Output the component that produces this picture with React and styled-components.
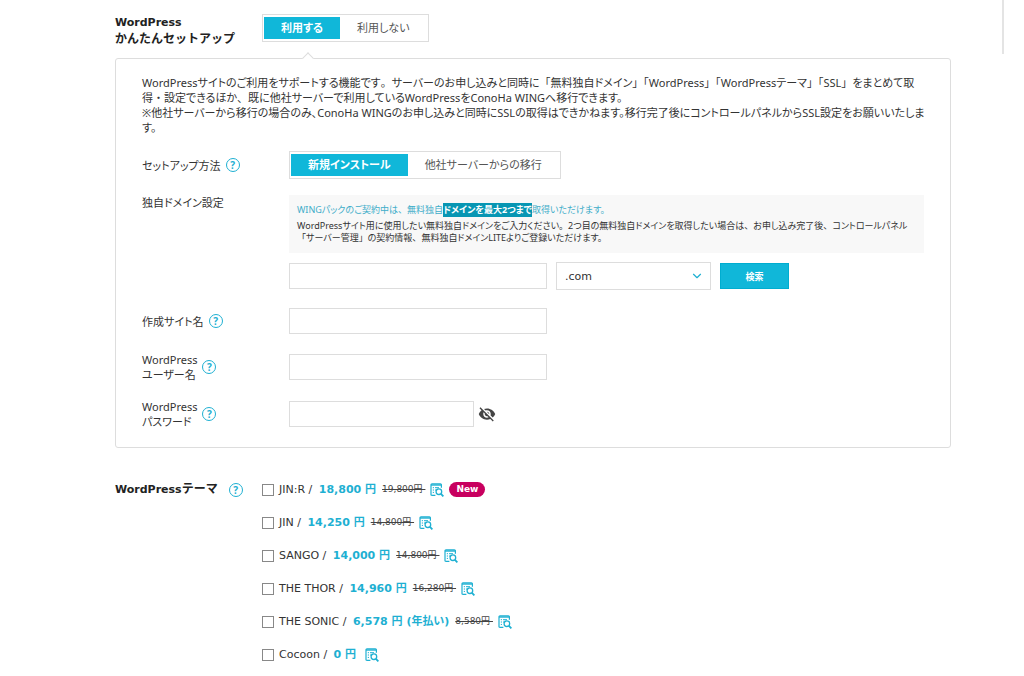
import React, { useState } from 'react'
import styled, { createGlobalStyle } from 'styled-components'
import { MdVisibilityOff } from 'react-icons/md'
import { FiChevronDown } from 'react-icons/fi'

const GlobalStyle = createGlobalStyle`
  * {
    box-sizing: border-box;
  }
  body {
    margin: 0;
    background: #fff;
    color: #333;
    font-family: "Noto Sans", "Noto Sans CJK JP", sans-serif;
    font-size: 11px;
    line-height: 15px;
    font-feature-settings: "palt";
  }
  button, input, select {
    font: inherit;
    color: inherit;
    margin: 0;
  }
`
const Page = styled.div`
  display: grid;
  grid-template-columns: minmax(0, 1fr) 73px;
`
const Main = styled.main`
  padding: 14px 0 12px 115px;
`
const Side = styled.div`
  width: 53px;
  height: 54px;
  border-right: 2px solid #e4e4e4;
`
const Section = styled.section`
  display: grid;
  grid-template-columns: 147px minmax(0, 1fr);
  align-items: start;
`
const Heading = styled.h2`
  display: flex;
  align-items: center;
  gap: 11px;
  margin: 0;
  font-family: "DejaVu Sans", "Noto Sans CJK JP", sans-serif;
  font-size: 12px;
  line-height: 17px;
  font-weight: bold;
  font-feature-settings: normal;
  color: #222;
`
const Latin = styled.span`
  font-size: 11px;
`
// punctuation at its full width
const Wide = styled.span`
  font-feature-settings: normal;
`
const Toggle = styled.div`
  display: inline-flex;
  padding: 2px 1px;
  border: 1px solid #ddd;
  background: #fff;
`
const ToggleButton = styled.button`
  height: 22px;
  padding: 0 17px;
  border: 0;
  background: ${props => (props.$active ? '#10b7d9' : '#fff')};
  color: ${props => (props.$active ? '#fff' : '#555')};
  font-weight: ${props => (props.$active ? 'bold' : 'normal')};
  line-height: 20px;
  cursor: pointer;
`
const Panel = styled.div`
  position: relative;
  margin-top: 10px;
  padding: 16px 20px 18px 26px;
  border: 1px solid #ddd;
  border-radius: 3px;
  &::before {
    content: "";
    position: absolute;
    top: -5px;
    left: 188px;
    width: 7px;
    height: 7px;
    border: solid #ddd;
    border-width: 1px 0 0 1px;
    background: #fff;
    transform: rotate(45deg);
  }
`
const Lead = styled.p`
  margin: 0 0 16px;
`
const Field = styled.div`
  display: grid;
  grid-template-columns: 147px minmax(0, 1fr);
  align-items: ${props => props.$align || 'center'};
  margin-top: ${props => props.$top || 0}px;
`
const FieldName = styled.div`
  display: flex;
  align-items: center;
  gap: 5px;
`
const HelpButton = styled.button`
  flex: none;
  width: 14px;
  height: 14px;
  padding: 0;
  border: 1px solid #1eb0d2;
  border-radius: 50%;
  background: #fff;
  color: #1eb0d2;
  font-family: "Noto Sans", sans-serif;
  font-size: 10px;
  font-weight: bold;
  line-height: 12px;
  text-align: center;
  cursor: pointer;
`
const Notice = styled.div`
  margin-right: 6px;
  padding: 8px 8px 9px;
  background: #f8f8f8;
  font-size: 9px;
  line-height: 12px;
  p {
    margin: 0;
  }
`
const NoticeLead = styled.p`
  line-height: 14px;
  color: #3fadc9;
  && {
    margin-bottom: 3px;
  }
`
const Marked = styled.mark`
  display: inline-block;
  background: #0796b3;
  color: #fff;
  font-weight: bold;
`
const Controls = styled.div`
  display: flex;
  align-items: center;
  gap: ${props => props.$gap || 9}px;
`
const TextInput = styled.input`
  width: ${props => props.$width || 258}px;
  height: 26px;
  padding: 0 8px;
  border: 1px solid #ddd;
  background: #fff;
`
const SelectBox = styled.div`
  position: relative;
  width: 155px;
  svg {
    position: absolute;
    top: 7px;
    right: 7px;
    color: #1eb0d2;
    pointer-events: none;
  }
`
const Select = styled.select`
  appearance: none;
  display: block;
  width: 100%;
  height: 28px;
  padding: 0 8px;
  border: 1px solid #ddd;
  border-radius: 0;
  background: #fff;
  font-family: "DejaVu Sans", sans-serif;
`
const SearchButton = styled.button`
  width: 69px;
  height: 26px;
  padding: 0;
  border: 1px solid #00add0;
  background: #10b7d9;
  color: #fff;
  font-size: 9px;
  font-weight: bold;
  cursor: pointer;
`
const EyeButton = styled.button`
  display: flex;
  padding: 0;
  border: 0;
  background: none;
  color: #444;
  cursor: pointer;
`
const Themes = styled(Section)`
  margin-top: 33px;
`
const ThemeList = styled.ul`
  display: grid;
  gap: 16px;
  margin: 0;
  padding: 0;
  list-style: none;
`
const ThemeItem = styled.li`
  display: flex;
  align-items: center;
  height: 17px;
  font-family: "DejaVu Sans", "Noto Sans CJK JP", sans-serif;
`
const ThemeLabel = styled.label`
  display: flex;
  align-items: center;
  white-space: pre;
`
const Check = styled.input`
  appearance: none;
  width: 12px;
  height: 12px;
  margin: 0 5px 0 0;
  border: 1px solid #888;
  background: #fff;
  &:checked {
    background: #10b7d9;
  }
`
const Price = styled.strong`
  margin-left: 3px;
  color: #1eb0d2;
`
const OldPrice = styled.s`
  margin-left: 6px;
  font-size: 9px;
  color: #444;
`
const DetailLink = styled.a`
  display: flex;
  margin-left: ${props => props.$gap || 5}px;
  color: #1eb0d2;
`
const Badge = styled.span`
  margin-left: 5px;
  padding: 0 7px;
  border-radius: 8px;
  background: #c8005f;
  color: #fff;
  font-size: 9px;
  font-weight: bold;
`

const themes = [
  { name: 'JIN:R', price: '18,800 円', old: '19,800円', isNew: true },
  { name: 'JIN', price: '14,250 円', old: '14,800円' },
  { name: 'SANGO', price: '14,000 円', old: '14,800円' },
  { name: 'THE THOR', price: '14,960 円', old: '16,280円' },
  { name: 'THE SONIC', price: '6,578 円 (年払い)', old: '8,580円' },
  { name: 'Cocoon', price: '0 円' },
]

function Help() {
  return <HelpButton type="button" aria-label="ヘルプ">?</HelpButton>
}

function DetailIcon() {
  return (
    <svg width="14" height="14" viewBox="0 0 14 14" fill="none" stroke="currentColor">
      <path d="M5.4 12.4H2Q1 12.4 1 11.4V1.8Q1 .8 2 .8H10.4Q11.4 .8 11.4 1.8V4.8" strokeWidth="1.2" />
      <path d="M1 2H11.4" strokeWidth="1.4" />
      <path d="M2.8 4.7H4M5 4.7H9M2.8 7H4M5 7H6M2.8 9.4H4" />
      <circle cx="8.9" cy="8.7" r="2.8" strokeWidth="1.3" />
      <path d="M10.9 10.8L13.4 13.4" strokeWidth="1.8" />
    </svg>
  )
}

function App() {
  const [easySetup, setEasySetup] = useState(true)
  const [install, setInstall] = useState(true)
  const [showPassword, setShowPassword] = useState(false)

  return (
    <>
      <GlobalStyle />
      <Page>
        <Main>
          <Section>
            <Heading>
              <span>
                <Latin>WordPress</Latin><br />
                かんたんセットアップ
              </span>
            </Heading>
            <div>
              <Toggle>
                <ToggleButton type="button" $active={easySetup} onClick={() => setEasySetup(true)}>利用する</ToggleButton>
                <ToggleButton type="button" $active={!easySetup} onClick={() => setEasySetup(false)}>利用しない</ToggleButton>
              </Toggle>
            </div>
          </Section>

          <Panel>
            <Lead>
              WordPressサイトのご利用をサポートする機能です<Wide>。</Wide>サーバーのお申し込みと同時に<Wide>「</Wide>無料独自ドメイン<Wide>」「</Wide>WordPress<Wide>」「</Wide>WordPressテーマ<Wide>」「</Wide>SSL<Wide>」</Wide>をまとめて取得<Wide>・</Wide>設定できるほか<Wide>、</Wide>既に他社サーバーで利用しているWordPressをConoHa WINGへ移行できます。<br />
              ※他社サーバーから移行の場合のみ、ConoHa WINGのお申し込みと同時にSSLの取得はできかねます。移行完了後にコントロールパネルからSSL設定をお願いいたします。
            </Lead>
            <Field>
              <FieldName>セットアップ方法<Help /></FieldName>
              <div>
                <Toggle>
                  <ToggleButton type="button" $active={install} onClick={() => setInstall(true)}>新規インストール</ToggleButton>
                  <ToggleButton type="button" $active={!install} onClick={() => setInstall(false)}>他社サーバーからの移行</ToggleButton>
                </Toggle>
              </div>
            </Field>
            <Field $top={16} $align="start">
              <FieldName as="label" htmlFor="domain">独自ドメイン設定</FieldName>
              <Notice>
                <NoticeLead>WINGパックのご契約中は<Wide>、</Wide>無料独自<Marked>ドメインを最大2つまで</Marked>取得いただけます。</NoticeLead>
                <p>
                  WordPressサイト用に使用したい無料独自ドメインをご入力ください<Wide>。</Wide>2つ目の無料独自ドメインを取得したい場合は<Wide>、</Wide>お申し込み完了後<Wide>、</Wide>コントロールパネル<Wide>「</Wide>サーバー管理<Wide>」</Wide>の契約情報<Wide>、</Wide>無料独自ドメインLITEよりご登録いただけます。
                </p>
              </Notice>
            </Field>
            <Field $top={9}>
              <span />
              <Controls>
                <TextInput id="domain" type="text" />
                <SelectBox>
                  <Select aria-label="トップレベルドメイン" defaultValue=".com">
                    <option>.com</option>
                  </Select>
                  <FiChevronDown size={14} />
                </SelectBox>
                <SearchButton type="button">検索</SearchButton>
              </Controls>
            </Field>
            <Field $top={18}>
              <FieldName><label htmlFor="site">作成サイト名</label><Help /></FieldName>
              <TextInput id="site" type="text" />
            </Field>
            <Field $top={18}>
              <FieldName><label htmlFor="user">WordPress<br />ユーザー名</label><Help /></FieldName>
              <TextInput id="user" type="text" />
            </Field>
            <Field $top={17}>
              <FieldName><label htmlFor="password">WordPress<br />パスワード</label><Help /></FieldName>
              <Controls $gap={4}>
                <TextInput id="password" type={showPassword ? 'text' : 'password'} $width={185} />
                <EyeButton type="button" aria-label="パスワードを表示" onClick={() => setShowPassword(!showPassword)}>
                  <MdVisibilityOff size={18} />
                </EyeButton>
              </Controls>
            </Field>
          </Panel>

          <Themes>
            <Heading><span><Latin>WordPress</Latin>テーマ</span><Help /></Heading>
            <ThemeList>
              {themes.map(theme => (
                <ThemeItem key={theme.name}>
                  <ThemeLabel>
                    <Check type="checkbox" />
                    {theme.name} / <Price>{theme.price}</Price>
                    {theme.old && <OldPrice>{theme.old + ' '}</OldPrice>}
                  </ThemeLabel>
                  <DetailLink href="#" aria-label={theme.name} $gap={theme.old ? 5 : 9}><DetailIcon /></DetailLink>
                  {theme.isNew && <Badge>New</Badge>}
                </ThemeItem>
              ))}
            </ThemeList>
          </Themes>
        </Main>
        <Side />
      </Page>
    </>
  )
}

export default App
